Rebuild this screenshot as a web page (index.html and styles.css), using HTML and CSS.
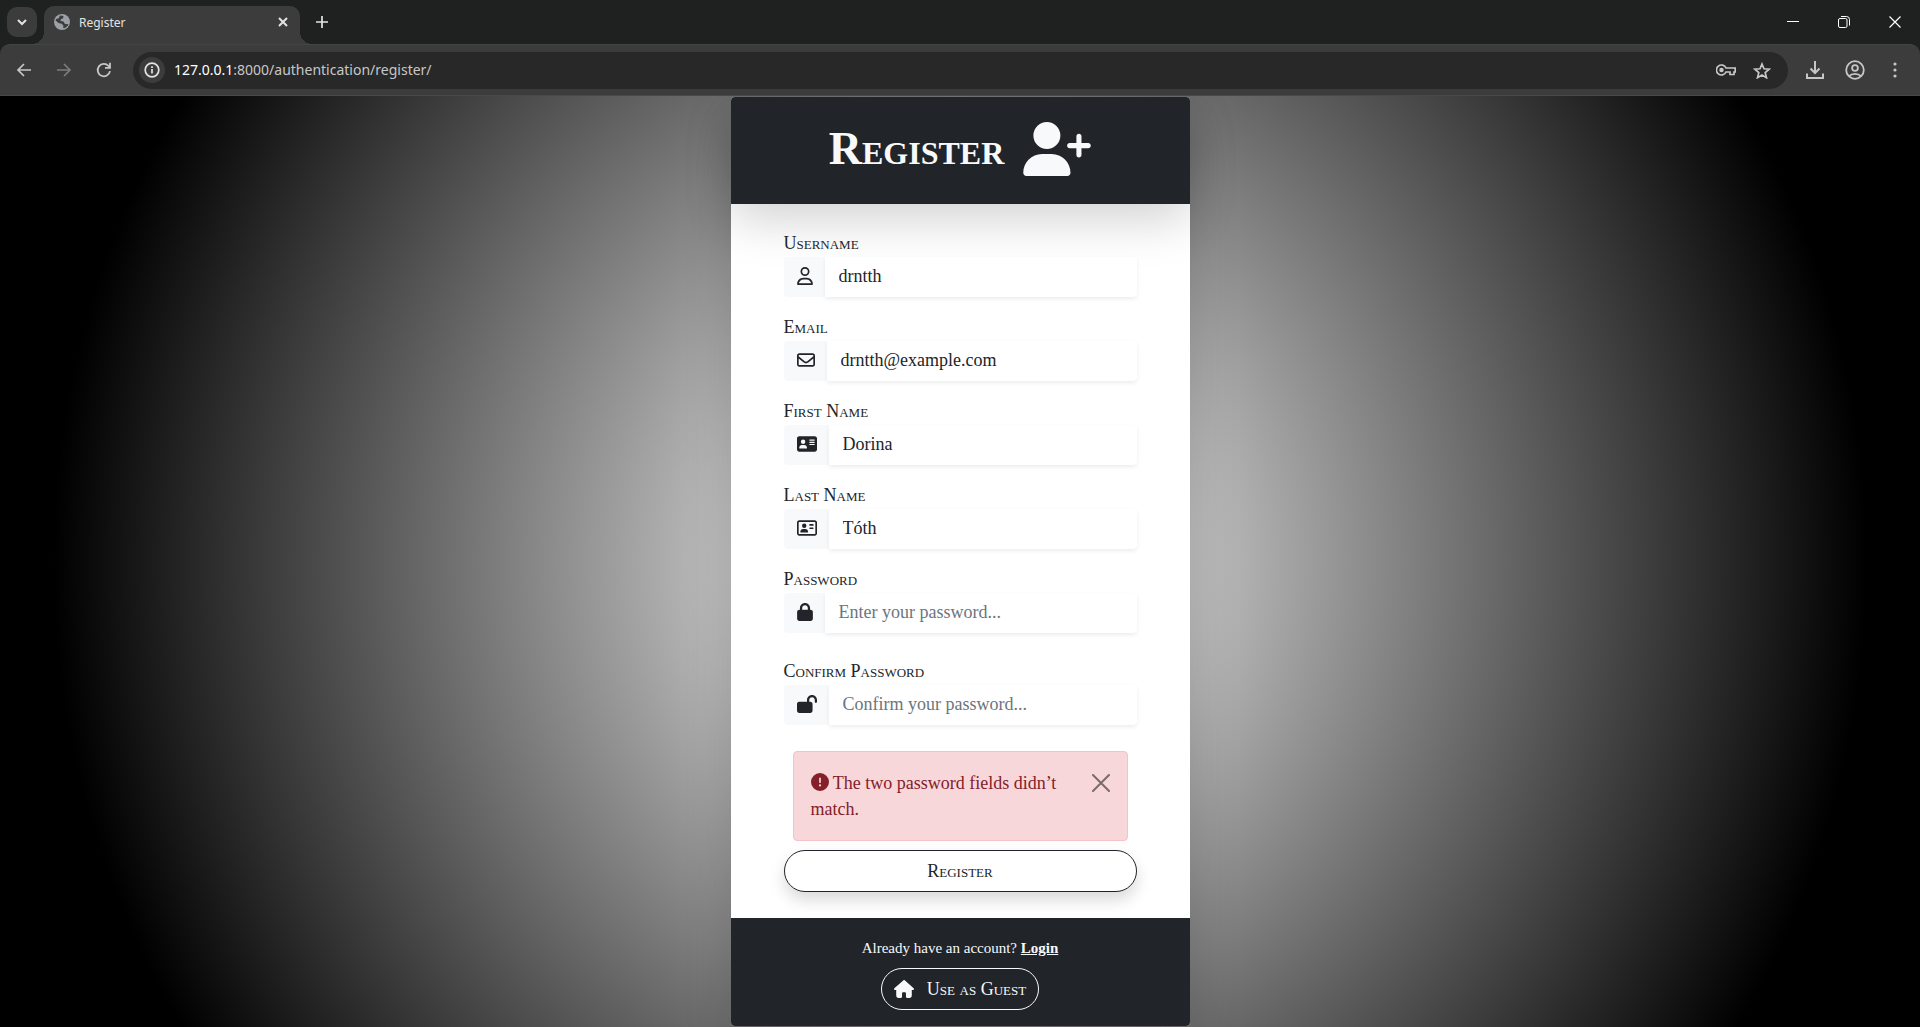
FILE: index.html
```html
<!DOCTYPE html>
<html lang="en">
<head>
<meta charset="utf-8">
<meta name="viewport" content="width=device-width, initial-scale=1">
<title>Register</title>
<link rel="stylesheet" href="styles.css">
</head>
<body>
<header class="browser">
  <div class="tabstrip">
    <button class="tab-search" aria-label="Search tabs"><svg width="10" height="10" viewBox="0 0 10 10"><path d="M1 3l4 4 4-4" fill="none" stroke="currentColor" stroke-width="2"/></svg></button>
    <div class="tab">
      <svg class="globe" width="16" height="16" viewBox="0 0 16 16"><circle cx="8" cy="8" r="8" fill="#9aa0a6"/><path d="M6 1.500L9.500 2l-.5 2.500-2 .5-.5 2 3 .5 1.500 2.500 3.500.2-.5 1.300-3 2.500-2-.2.5-2-1.800-2L4.500 9 1.600 6.500 2 5l2.500-.5z" fill="#3c3c3c"/></svg>
      <span class="tab-title">Register</span>
      <button class="tab-close" aria-label="Close tab"><svg width="10" height="10" viewBox="0 0 10 10"><path d="M1 1l8 8M9 1l-8 8" stroke="currentColor" stroke-width="2"/></svg></button>
    </div>
    <button class="new-tab" aria-label="New tab"><svg width="12" height="12" viewBox="0 0 12 12"><path d="M6 0v12M0 6h12" stroke="currentColor" stroke-width="1.700"/></svg></button>
    <div class="window-controls">
      <button aria-label="Minimize"><svg width="12" height="12" viewBox="0 0 12 12"><path d="M0 5.500h12" stroke="currentColor"/></svg></button>
      <button aria-label="Restore"><svg width="12" height="12" viewBox="0 0 12 12" fill="none" stroke="currentColor"><rect x=".5" y="2.500" width="8.500" height="9" rx="1.500"/><path d="M3 .5h5.500a3 3 0 0 1 3 3V9.500"/></svg></button>
      <button aria-label="Close"><svg width="12" height="12" viewBox="0 0 12 12"><path d="M.5.5l11 11M11.500.5l-11 11" stroke="currentColor" stroke-width="1.200"/></svg></button>
    </div>
  </div>
  <div class="toolbar">
    <nav class="nav-buttons">
      <button aria-label="Back"><svg width="16" height="14" viewBox="0 0 16 14" fill="none" stroke="currentColor" stroke-width="1.700"><path d="M15 7H2M8 1L2 7l6 6"/></svg></button>
      <button aria-label="Forward" disabled><svg width="16" height="14" viewBox="0 0 16 14" fill="none" stroke="currentColor" stroke-width="1.700"><path d="M1 7h13M8 1l6 6-6 6"/></svg></button>
      <button aria-label="Reload"><svg width="16" height="16" viewBox="0 0 16 16" fill="none" stroke="currentColor" stroke-width="1.800"><path d="M14 9.200A6.200 6.200 0 1 1 12.600 4L14 5.500M14 .8v5H9"/></svg></button>
    </nav>
    <div class="omnibox">
      <button class="site-info" aria-label="Site information"><svg width="16" height="16" viewBox="0 0 16 16" fill="none" stroke="currentColor" stroke-width="1.700"><circle cx="8" cy="8" r="6.800"/><path d="M8 7v4.500M8 4.200v1.800"/></svg></button>
      <span class="url"><span class="host">127.0.0.1</span>:8000/authentication/register/</span>
      <button class="box-btn" aria-label="Passwords"><svg width="20" height="12" viewBox="0 0 20 12" fill="none" stroke="currentColor" stroke-width="1.700"><path d="M10 4a5 5 0 1 0 0 4h4v2.500h4V8h1.200V4z"/><circle cx="5.500" cy="6" r="1.400" fill="currentColor"/></svg></button>
      <button class="box-btn" aria-label="Bookmark"><svg width="18" height="17" viewBox="0 0 18 17" fill="none" stroke="currentColor" stroke-width="1.700"><path d="M9 2l2 4.800 5.200.4-4 3.400 1.300 5.100L9 13l-4.500 2.700 1.300-5.100-4-3.400L7 6.800z"/></svg></button>
    </div>
    <div class="actions">
      <button aria-label="Downloads"><svg width="18" height="18" viewBox="0 0 18 18" fill="none" stroke="currentColor" stroke-width="2"><path d="M9 0v12M4.500 7.500L9 12l4.500-4.500M1 12.500V17h16v-4.500"/></svg></button>
      <button aria-label="Profile"><svg width="20" height="20" viewBox="0 0 20 20" fill="none" stroke="currentColor" stroke-width="1.800"><circle cx="10" cy="10" r="8.800"/><circle cx="10" cy="8" r="2.900"/><path d="M4 16.200c3-3 9-3 12 0"/></svg></button>
      <button aria-label="Menu"><svg width="4" height="16" viewBox="0 0 4 16" fill="currentColor"><circle cx="2" cy="2" r="1.600"/><circle cx="2" cy="8" r="1.600"/><circle cx="2" cy="14" r="1.600"/></svg></button>
    </div>
  </div>
</header>

<main class="page">
  <section class="card">
    <header class="card-header">
      <h1>Register</h1>
      <svg width="68" height="54" viewBox="0 0 640 512" fill="currentColor"><path d="M96 128a128 128 0 1 1 256 0A128 128 0 1 1 96 128zM0 482.300C0 383.800 79.800 304 178.300 304l91.400 0C368.200 304 448 383.800 448 482.300c0 16.400-13.300 29.700-29.700 29.700L29.700 512C13.300 512 0 498.700 0 482.300zM504 312l0-64-64 0c-13.300 0-24-10.700-24-24s10.700-24 24-24l64 0 0-64c0-13.300 10.700-24 24-24s24 10.700 24 24l0 64 64 0c13.300 0 24 10.700 24 24s-10.700 24-24 24l-64 0 0 64c0 13.300-10.700 24-24 24s-24-10.700-24-24z"/></svg>
    </header>
    <form class="card-body">
      <div class="field">
        <label for="username">Username</label>
        <div class="group">
          <span class="addon"><svg width="16" height="18" viewBox="0 0 448 512" fill="currentColor"><path d="M304 128a80 80 0 1 0 -160 0 80 80 0 1 0 160 0zM96 128a128 128 0 1 1 256 0A128 128 0 1 1 96 128zM49.300 464l349.500 0c-8.900-63.300-63.300-112-129-112l-91.400 0c-65.700 0-120.100 48.700-129 112zM0 482.300C0 383.800 79.800 304 178.300 304l91.400 0C368.200 304 448 383.800 448 482.300c0 16.400-13.300 29.700-29.700 29.700L29.700 512C13.300 512 0 498.700 0 482.300z"/></svg></span>
          <input id="username" type="text" value="drntth">
        </div>
      </div>
      <div class="field">
        <label for="email">Email</label>
        <div class="group">
          <span class="addon"><svg width="18" height="18" viewBox="0 0 512 512" fill="currentColor"><path d="M64 112c-8.800 0-16 7.200-16 16l0 22.100L220.500 291.700c20.700 17 50.400 17 71.100 0L464 150.100l0-22.100c0-8.800-7.200-16-16-16L64 112zM48 212.200L48 384c0 8.800 7.200 16 16 16l384 0c8.800 0 16-7.200 16-16l0-171.800L322 328.800c-38.400 31.500-93.700 31.500-132 0L48 212.200zM0 128C0 92.700 28.700 64 64 64l384 0c35.300 0 64 28.700 64 64l0 256c0 35.300-28.700 64-64 64L64 448c-35.300 0-64-28.700-64-64L0 128z"/></svg></span>
          <input id="email" type="email" value="drntth@example.com">
        </div>
      </div>
      <div class="field">
        <label for="first">First Name</label>
        <div class="group">
          <span class="addon"><svg width="20" height="18" viewBox="0 0 576 512" fill="currentColor" fill-rule="evenodd"><path d="M64 32C28.700 32 0 60.700 0 96L0 416c0 35.300 28.700 64 64 64l448 0c35.300 0 64-28.700 64-64l0-320c0-35.300-28.700-64-64-64L64 32zm80 256l64 0c44.200 0 80 35.800 80 80c0 8.800-7.200 16-16 16L80 384c-8.800 0-16-7.200-16-16c0-44.200 35.800-80 80-80zm-32-96a64 64 0 1 1 128 0 64 64 0 1 1 -128 0zM368 128h128a16 16 0 0 1 0 32h-128a16 16 0 0 1 0-32zm0 64h128a16 16 0 0 1 0 32h-128a16 16 0 0 1 0-32zm0 64h128a16 16 0 0 1 0 32h-128a16 16 0 0 1 0-32z"/></svg></span>
          <input id="first" type="text" value="Dorina">
        </div>
      </div>
      <div class="field">
        <label for="last">Last Name</label>
        <div class="group">
          <span class="addon"><svg width="20" height="18" viewBox="0 0 576 512" fill="currentColor"><path d="M512 80c8.800 0 16 7.200 16 16l0 320c0 8.800-7.200 16-16 16L64 432c-8.800 0-16-7.200-16-16L48 96c0-8.800 7.200-16 16-16l448 0zM64 32C28.700 32 0 60.700 0 96L0 416c0 35.300 28.700 64 64 64l448 0c35.300 0 64-28.700 64-64l0-320c0-35.300-28.700-64-64-64L64 32zM208 256a64 64 0 1 0 0-128 64 64 0 1 0 0 128zm-32 32c-44.200 0-80 35.800-80 80c0 8.800 7.200 16 16 16l192 0c8.800 0 16-7.200 16-16c0-44.200-35.800-80-80-80l-64 0zM376 144a24 24 0 0 0 0 48h80a24 24 0 0 0 0-48zm0 96a24 24 0 0 0 0 48h80a24 24 0 0 0 0-48z"/></svg></span>
          <input id="last" type="text" value="Tóth">
        </div>
      </div>
      <div class="field field-password">
        <label for="password">Password</label>
        <div class="group">
          <span class="addon"><svg width="16" height="18" viewBox="0 0 448 512" fill="currentColor"><path d="M144 144l0 48 160 0 0-48c0-44.200-35.800-80-80-80s-80 35.800-80 80zM80 192l0-48C80 64.500 144.500 0 224 0s144 64.500 144 144l0 48 16 0c35.300 0 64 28.700 64 64l0 192c0 35.300-28.700 64-64 64L64 512c-35.300 0-64-28.700-64-64L0 256c0-35.300 28.700-64 64-64l16 0z"/></svg></span>
          <input id="password" type="password" placeholder="Enter your password...">
        </div>
      </div>
      <div class="field">
        <label for="confirm">Confirm Password</label>
        <div class="group">
          <span class="addon"><svg width="20" height="18" viewBox="0 0 576 512" fill="currentColor"><path d="M352 144c0-44.200 35.800-80 80-80s80 35.800 80 80l0 48c0 17.700 14.300 32 32 32s32-14.300 32-32l0-48C576 64.500 511.500 0 432 0S288 64.500 288 144l0 48L64 192c-35.300 0-64 28.700-64 64L0 448c0 35.300 28.700 64 64 64l320 0c35.300 0 64-28.700 64-64l0-192c0-35.300-28.700-64-64-64l-32 0 0-48z"/></svg></span>
          <input id="confirm" type="password" placeholder="Confirm your password...">
        </div>
      </div>
      <div class="alert" role="alert">
        <p><svg class="alert-icon" width="18" height="18" viewBox="0 0 512 512" fill="currentColor"><path d="M256 512A256 256 0 1 0 256 0a256 256 0 1 0 0 512zm0-384c13.300 0 24 10.700 24 24l0 112c0 13.300-10.700 24-24 24s-24-10.700-24-24l0-112c0-13.300 10.700-24 24-24zM224 352a32 32 0 1 1 64 0 32 32 0 1 1 -64 0z"/></svg> The two password fields didn’t match.</p>
        <button type="button" class="alert-close" aria-label="Close"><svg width="18" height="18" viewBox="0 0 18 18"><path d="M1 1l16 16M17 1L1 17" stroke="currentColor" stroke-width="2" stroke-linecap="round"/></svg></button>
      </div>
      <button type="submit" class="pill submit">Register</button>
    </form>
    <footer class="card-footer">
      <p>Already have an account? <a href="#login">Login</a></p>
      <a class="pill guest" href="#guest"><svg width="20" height="18" viewBox="0 0 576 512" fill="currentColor"><path d="M575.800 255.500c0 18-15 32.100-32 32.100h-32l.7 160.200c0 35.400-28.600 64.200-64 64.200h-72.400c-17.700 0-32-14.300-32-32v-96c0-17.700-14.300-32-32-32h-48c-17.700 0-32 14.300-32 32v96c0 17.700-14.300 32-32 32H128c-35.300 0-64-28.700-64-64V287.600H32c-18 0-32-14-32-32.100 0-9 3-17 10-24L266.400 8c7-7 15-8 22-8s15 2 21 7L564.800 231.500c8 7 12 15 11 24z"/></svg>Use as Guest</a>
    </footer>
  </section>
</main>
</body>
</html>
```
FILE: styles.css
```css
*, *::before, *::after { box-sizing: border-box; }
body {
  margin: 0;
  min-height: 100vh;
  display: flex;
  flex-direction: column;
  font-family: "Liberation Serif", "Times New Roman", serif;
  font-size: 18px;
  line-height: 26px;
  color: #212529;
}
h1, p { margin: 0; }
button, input { font: inherit; color: inherit; }
button { padding: 0; border: 0; background: none; cursor: pointer; }
svg { display: block; flex: none; }

/* Browser frame */
.browser {
  background: #1f2120;
  color: #e3e3e3;
  font-family: "Noto Sans", "Open Sans", sans-serif;
  font-size: 12px;
  line-height: 20px;
}
.browser button { display: flex; align-items: center; justify-content: center; }
.tabstrip { display: flex; height: 44px; padding-left: 7px; }
.tab-search {
  width: 30px;
  height: 30px;
  margin: 7px 7px 0 0;
  border-radius: 10px;
  background: #3c3c3c;
}
.tab {
  position: relative;
  display: flex;
  align-items: center;
  width: 256px;
  height: 38px;
  margin-top: 6px;
  padding: 0 12px 6px 10px;
  border-radius: 10px 10px 0 0;
  background: #3c3c3c;
}
.tab::before, .tab::after {
  content: "";
  position: absolute;
  bottom: 0;
  width: 12px;
  height: 12px;
}
.tab::before { left: -12px; background: radial-gradient(circle at 0 0, transparent 12px, #3c3c3c 12px); }
.tab::after { right: -12px; background: radial-gradient(circle at 100% 0, transparent 12px, #3c3c3c 12px); }
.tab-title { flex: 1; padding: 2px 0 0 9px; }
.new-tab { width: 32px; height: 32px; margin: 6px 0 0 6px; }
.window-controls { display: flex; margin-left: auto; color: #fff; }
.window-controls button { width: 51px; height: 44px; }
.toolbar {
  display: flex;
  align-items: center;
  height: 52px;
  padding: 0 5px 0 8px;
  border-top: 1px solid #444;
  border-bottom: 1px solid #484848;
  border-radius: 10px 10px 0 0;
  background: #3c3c3c;
  color: #c7c7c7;
}
.nav-buttons { display: flex; gap: 8px; margin-right: 13px; }
.nav-buttons button { width: 32px; height: 32px; }
.nav-buttons button:disabled { color: #7c7c7c; }
.omnibox {
  flex: 1;
  display: flex;
  align-items: center;
  height: 37px;
  padding: 0 8px 0 6px;
  border-radius: 19px;
  background: #282828;
}
.site-info { width: 26px; height: 26px; border-radius: 50%; background: #3c3c3c; color: #e3e3e3; }
.url { flex: 1; padding-left: 9px; font-size: 14px; }
.host { color: #fff; }
.box-btn { width: 36px; height: 32px; }
.actions { display: flex; padding-left: 7px; }
.actions button { width: 40px; height: 32px; }

/* Page */
.page {
  flex: 1;
  display: flex;
  justify-content: center;
  align-items: flex-start;
  padding-top: 1px;
  background: radial-gradient(circle, #fff, #000 85%);
  overflow: hidden;
}
.card {
  width: 100%;
  max-width: 459px;
  border-radius: 4px;
  background: #fff;
  box-shadow: 0 16px 48px rgba(0, 0, 0, .175);
}
.card-header {
  display: flex;
  align-items: center;
  justify-content: center;
  gap: 19px;
  padding: 22px 24px 26px;
  border-radius: 4px 4px 0 0;
  background: #212529;
  color: #f8f9fa;
  box-shadow: 0 16px 48px rgba(0, 0, 0, .175);
}
.card-header h1 { font-size: 46px; line-height: 59px; font-variant: small-caps; }
.card-body { padding: 25px 53px 26px; }
.field { margin-bottom: 16px; }
.field-password { margin-bottom: 24px; }
.field label { display: block; line-height: 28px; font-variant: small-caps; }
.group { display: flex; height: 40px; }
.addon {
  display: flex;
  align-items: center;
  padding: 0 12px 2px 13px;
  border-radius: 4px 0 0 4px;
  background: #f8f9fa;
}
.group input {
  flex: 1;
  min-width: 0;
  padding: 0 13px 2px 14px;
  border: 0;
  border-radius: 0 4px 4px 0;
  background: #fff;
  box-shadow: 0 2px 4px rgba(0, 0, 0, .075);
}
.group input::placeholder { color: #6c757d; opacity: 1; }
.alert {
  display: flex;
  justify-content: space-between;
  align-items: flex-start;
  gap: 24px;
  margin: 26px 9px 9px;
  padding: 18px 17px 18px;
  min-height: 90px;
  border: 1px solid #f5c2c7;
  border-radius: 4px;
  background: #f8d7da;
  color: #842029;
}
.alert-icon { display: inline-block; vertical-align: -2px; }
.alert-close { padding-top: 4px; color: #7c6b6d; }
.pill {
  height: 42px;
  border: 1px solid;
  border-radius: 21px;
  font-variant: small-caps;
}
.submit {
  display: block;
  width: 100%;
  border-color: #212529;
  background: #fff;
  box-shadow: 0 8px 16px rgba(0, 0, 0, .15);
}
.card-footer {
  display: flex;
  flex-direction: column;
  align-items: center;
  gap: 8px;
  padding: 18px 16px 16px;
  border-radius: 0 0 4px 4px;
  background: #212529;
  color: #f8f9fa;
  font-size: 15px;
  line-height: 24px;
}
.card-footer a { color: inherit; }
.card-footer p a { font-weight: bold; }
.guest {
  display: flex;
  align-items: center;
  gap: 13px;
  padding: 0 12px;
  font-size: 18px;
  text-decoration: none;
}
```
